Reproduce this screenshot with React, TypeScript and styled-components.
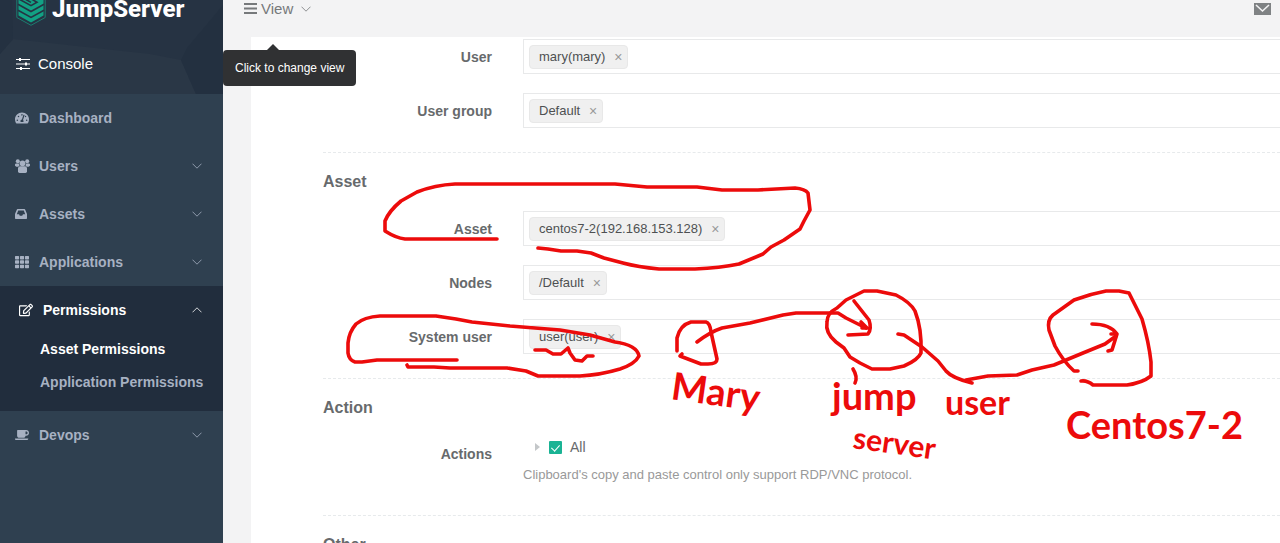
import React from 'react';
import styled, { createGlobalStyle } from 'styled-components';
import { FaCoffee, FaRegEdit, FaTachometerAlt, FaTh } from 'react-icons/fa';

const GlobalStyle = createGlobalStyle`
  *, *::before, *::after { box-sizing: border-box; }
  body {
    margin: 0;
    background: #f3f3f4;
    color: #676a6c;
    font: 13px/20px "Liberation Sans", Arial, sans-serif;
  }
  button, input { font: inherit; color: inherit; }
`;

const Page = styled.div`
  position: relative;
  display: flex;
  height: 100vh;
  overflow: hidden;
`;

const Sidebar = styled.aside`
  flex: 0 0 223px;
  background: #2f4050;
`;

const SidebarHeader = styled.header`
  position: relative;
  height: 94px;
  overflow: hidden;
  background: #263343;
  color: #fff;
`;

const HeaderPattern = styled.svg`
  position: absolute;
  inset: 0;
  width: 100%;
  height: 100%;
`;

const Brand = styled.a`
  position: relative;
  display: flex;
  align-items: flex-end;
  gap: 6px;
  height: 26px;
  padding-left: 16px;
  color: #fff;
  font: 800 24px/34px Roboto, "Liberation Sans", sans-serif;
  text-decoration: none;
`;

const ConsoleLink = styled.a`
  position: relative;
  display: flex;
  align-items: center;
  gap: 8px;
  margin-top: 28px;
  padding-left: 16px;
  color: #fff;
  font-size: 15px;
  text-decoration: none;
`;

const NavGroup = styled.div<{ $active?: boolean }>`
  padding: ${(p) => (p.$active ? '0 0 12px 4px' : '0')};
  background: ${(p) => (p.$active ? '#212d3d' : 'transparent')};
`;

const NavItem = styled.a<{ $active?: boolean }>`
  display: flex;
  align-items: center;
  height: 48px;
  padding: 0 21px 0 15px;
  color: ${(p) => (p.$active ? '#fff' : '#a7b1c2')};
  font-size: 14px;
  font-weight: 700;
  text-decoration: none;
`;

const NavIcon = styled.span`
  display: flex;
  width: 24px;
  font-size: 14px;
`;

const NavText = styled.span`
  flex: 1;
`;

const SubItem = styled.a<{ $active?: boolean }>`
  display: block;
  padding-left: 36px;
  color: ${(p) => (p.$active ? '#fff' : '#a7b1c2')};
  font-size: 14px;
  font-weight: 700;
  line-height: 33px;
  white-space: nowrap;
  text-decoration: none;
`;

const SubList = styled.div`
  margin-top: -1px;
`;

const Main = styled.main`
  flex: 1;
  min-width: 0;
  padding-left: 28px;
`;

const TopBar = styled.div`
  display: flex;
  align-items: center;
  justify-content: space-between;
  height: 37px;
  padding: 0 9px 20px 0;
`;

const ViewButton = styled.button`
  position: relative;
  display: flex;
  align-items: center;
  gap: 4px;
  margin-left: -7px;
  padding: 0;
  border: 0;
  background: none;
  color: #76797b;
  font-size: 15px;
`;

const Tooltip = styled.div`
  position: absolute;
  z-index: 2;
  top: 50px;
  left: 223px;
  padding: 8px 12px;
  border-radius: 4px;
  background: #303133;
  color: #fff;
  font-size: 12px;
  white-space: nowrap;

  &::before {
    content: "";
    position: absolute;
    top: -6px;
    left: 44px;
    border: 6px solid transparent;
    border-top: 0;
    border-bottom-color: #303133;
  }
`;

const MailButton = styled.button`
  display: flex;
  padding: 0;
  border: 0;
  background: none;
`;

const Panel = styled.form`
  min-height: 100vh;
  padding: 2px 0 0 72px;
  background: #fff;
`;

const Section = styled.section`
  & + & {
    border-top: 1px dashed #e7eaec;
  }
`;

const SectionTitle = styled.h3`
  margin: 0;
  padding: 18px 0;
  font-size: 16px;
  line-height: 22px;
`;

const Row = styled.div<{ $last?: boolean }>`
  display: flex;
  align-items: center;
  gap: 31px;
  margin-bottom: ${(p) => (p.$last ? '24px' : '19px')};
`;

const RowLabel = styled.label`
  flex: 0 0 169px;
  font-size: 14px;
  font-weight: 700;
  text-align: right;
`;

const TagBox = styled.div`
  display: flex;
  flex: 1;
  align-items: center;
  height: 35px;
  padding: 0 5px;
  border: solid #e8e9ea;
  border-width: 1px 0 1px 1px;
`;

const Tag = styled.span`
  display: flex;
  align-items: center;
  gap: 8px;
  height: 24px;
  padding: 0 4px 0 9px;
  border: 1px solid #e8e8e8;
  border-radius: 4px;
  background: #f0f0f0;
  color: #4e5052;
  white-space: nowrap;
`;

const RemoveButton = styled.button`
  width: 10px;
  padding: 0;
  border: 0;
  background: none;
  color: #999;
  font-size: 14px;
  line-height: 20px;
`;

const TagInput = styled.input`
  flex: 1;
  min-width: 0;
  border: 0;
  outline: 0;
  background: none;
`;

const ActionRow = styled(Row)`
  align-items: flex-start;
  margin: 0 0 30px;
`;

const ActionLabel = styled.div`
  flex: 0 0 169px;
  padding-top: 7px;
  font-size: 14px;
  font-weight: 700;
  text-align: right;
`;

const Tree = styled.div`
  display: flex;
  align-items: center;
  gap: 9px;
  padding-left: 12px;
`;

const TreeToggle = styled.button`
  width: 5px;
  height: 8px;
  padding: 0;
  border: solid transparent;
  border-width: 4px 0 4px 5px;
  border-left-color: #c4c7c9;
  background: none;
`;

const TreeLabel = styled.label`
  display: flex;
  align-items: center;
  gap: 8px;
  font-size: 14px;
`;

const Checkbox = styled.input`
  appearance: none;
  position: relative;
  width: 13px;
  height: 13px;
  margin: 0;
  border-radius: 1px;
  background: #1ab394;

  &:checked::after {
    content: "";
    position: absolute;
    top: 2px;
    left: 4px;
    width: 5px;
    height: 8px;
    border: solid #fff;
    border-width: 0 1px 1px 0;
    transform: rotate(42deg);
  }
`;

const HelpText = styled.p`
  margin: 8px 0 0;
  color: #999;
`;

const Ink = styled.svg`
  position: absolute;
  z-index: 3;
  top: 0;
  left: 0;
  pointer-events: none;

  text {
    fill: #ec0b0b;
    font-family: Lato, "Liberation Sans", sans-serif;
    font-weight: 700;
  }
`;

function Chevron({ up = false }: { up?: boolean }) {
  return (
    <svg width="10" height="6" viewBox="0 0 10 6" fill="none" stroke="currentColor" opacity="0.8" aria-hidden="true">
      <path d={up ? 'M.5 5.3 5 .8l4.5 4.5' : 'M.5.7 5 5.2 9.5.7'} />
    </svg>
  );
}

function GroupIcon() {
  return (
    <svg width="15" height="14" viewBox="0 0 15 14" fill="currentColor" aria-hidden="true">
      <circle cx="2.800" cy="2.300" r="2" />
      <circle cx="12.200" cy="2.300" r="2" />
      <path d="M.9 4.500h2.800l.9 1.800-1.200 1.500H1.300L0 6.800V5.300ZM14.100 4.500h-2.800l-.9 1.800 1.200 1.500h2.100L15 6.800V5.300Z" />
      <circle cx="7.500" cy="4.300" r="2.900" />
      <path d="M4.600 7.200h5.800l1.600 1.500v3.600Q12 14 10.500 14h-6Q3 14 3 12.300V8.700Z" />
    </svg>
  );
}

function TrayIcon() {
  return (
    <svg width="12" height="10" viewBox="0 0 12 10" fill="currentColor" fillRule="evenodd" aria-hidden="true">
      <path d="M2.600 0h6.800q.5 0 .7.500L12 5v4.300q0 .7-.7.700H.7Q0 10 0 9.300V5L1.900.5q.2-.5.700-.500ZM3.200 1.600 1.800 5.200H4l.8 1.500h2.400L8 5.200h2.200L8.800 1.600Z" />
    </svg>
  );
}

function LogoMark() {
  return (
    <svg width="30" height="30" viewBox="0 0 30 30" fill="none" aria-hidden="true">
      <path d="M.8 0v21.500L15 29.300l14.200-7.800V0" stroke="#1c7d70" />
      <path d="M2.500 0h25v19.500L15 26.500 2.500 19.500Z" fill="#12a184" />
      <path
        d="m2 14.200 13 7.200 13-7.200M2 8.300l13 7.200 13-7.200M2 2.500l13 7.200 6-3.400-5.500-3.300M9 3l6 3.400M28 3l-7-3"
        stroke="#263343"
        strokeWidth="1.600"
      />
    </svg>
  );
}

const navItems = [
  { label: 'Dashboard', icon: <FaTachometerAlt /> },
  { label: 'Users', icon: <GroupIcon />, expandable: true },
  { label: 'Assets', icon: <TrayIcon />, expandable: true },
  { label: 'Applications', icon: <FaTh />, expandable: true },
  { label: 'Permissions', icon: <FaRegEdit />, expandable: true, children: ['Asset Permissions', 'Application Permissions'] },
  { label: 'Devops', icon: <FaCoffee />, expandable: true },
];

function TagField({ id, label, value, last }: { id: string; label: string; value: string; last?: boolean }) {
  return (
    <Row $last={last}>
      <RowLabel htmlFor={id}>{label}</RowLabel>
      <TagBox>
        <Tag>
          {value}
          <RemoveButton type="button" aria-label={`Remove ${value}`}>×</RemoveButton>
        </Tag>
        <TagInput id={id} type="text" />
      </TagBox>
    </Row>
  );
}

function Annotations() {
  return (
    <Ink width="1280" height="543" viewBox="0 0 1280 543" aria-label="Connection notes">
      <g fill="none" stroke="#ec0b0b" strokeWidth="3.600" strokeLinecap="round" strokeLinejoin="round">
        <path d="M497 239H405Q396 238 385 231V221Q389 211 401 201L417 192Q435 185 455 184H615L647 187H697L722 190H758L795 188Q805 189 808 193L810 210L804 221L800 229L784 240L771 247L763 254L739 264Q720 268 695 269H659Q638 267 623 263L604 258L591 253L577 251H561L548 249L538 248" />
        <path d="M457 360H377L362 362H355Q349 360 348 353V343Q349 332 356 324Q364 317 380 316H436L456 319L472 322L510 326L560 330L590 335L615 342Q637 345 639 356Q635 364 620 369Q600 375 580 376H538L526 371L507 368H450L434 367H408L407 365" />
        <path d="M535 350H546L553 354H561L568 348L570 353L575 360L582 361L587 356L593 356" />
        <path d="M677 351V338Q680 325 691 322H706Q710 323 711 332L717 359Q717 364 708 364H701L680 356L682 354" />
        <path d="M697 342Q710 332 722 328L750 323L783 315L796 313H838L846 318L866 328" />
        <path d="M854 301 869 320Q872 329 868 334L848 335M861 322 867 328 862 328" />
        <path d="M836 342Q825 333 827 322Q827 313 837 308L846 300L864 291H877L896 295Q910 302 915 311Q922 329 921 353Q918 360 904 366L890 369H872L860 363L850 357L844 348Z" />
        <path d="M898 334 904 335 922 347 938 361 946 371Q952 378 972 383M966 380 988 376 1017 375 1032 370 1054 365 1083 353 1105 344 1116 336" />
        <path d="M1092 324Q1110 324 1117 334L1112 350 1108 351M1111 334H1117" />
        <path d="M1078 371H1074Q1063 361 1055 346L1049 330Q1047 320 1053 315L1074 300Q1090 294 1106 291H1119L1129 293L1135 305L1142 319Q1149 343 1151 362V376Q1142 383 1127 385H1093Q1087 380 1081 381" />
        <path d="M853 369Q858 377 855 383" />
      </g>
      <text x="670" y="399" fontSize="38" transform="rotate(8 670 399)">Mary</text>
      <text x="832" y="410" fontSize="38">jump</text>
      <text x="852" y="448" fontSize="30" transform="rotate(8 852 448)">server</text>
      <text x="945" y="415" fontSize="34">user</text>
      <text x="1066" y="439" fontSize="38">Centos7-2</text>
    </Ink>
  );
}

export default function App() {
  return (
    <Page>
      <GlobalStyle />
      <Sidebar>
        <SidebarHeader>
          <HeaderPattern viewBox="0 0 223 94" preserveAspectRatio="none" aria-hidden="true">
            <path d="M0 54 13 39 150 54 181 60 196 94H0Z" fill="#2a3746" />
            <path d="M0 0h12L13 39 0 54Z" fill="#243141" />
            <path d="M223 5 187 48l-6 12 15 34h27Z" fill="#233040" />
          </HeaderPattern>
          <Brand href="#">
            <LogoMark />
            JumpServer
          </Brand>
          <ConsoleLink href="#">
            <svg width="14" height="12" viewBox="0 0 14 12" fill="currentColor" aria-hidden="true">
              <path d="M0 1h14v1H0zM0 5.500h14v1H0zM0 10h14v1H0z" />
              <path d="M3 0h2v3H3zM9 4.500h2v3H9zM4 9h2v3H4z" />
            </svg>
            Console
          </ConsoleLink>
        </SidebarHeader>
        <nav>
          {navItems.map((item) => {
            const open = Boolean(item.children);
            return (
              <NavGroup key={item.label} $active={open}>
                <NavItem href="#" $active={open}>
                  <NavIcon>{item.icon}</NavIcon>
                  <NavText>{item.label}</NavText>
                  {item.expandable && <Chevron up={open} />}
                </NavItem>
                {item.children && (
                  <SubList>
                    {item.children.map((child, i) => (
                      <SubItem key={child} href="#" $active={i === 0}>{child}</SubItem>
                    ))}
                  </SubList>
                )}
              </NavGroup>
            );
          })}
        </nav>
      </Sidebar>
      <Main>
        <TopBar>
          <ViewButton type="button" aria-describedby="view-tip">
            <svg width="13" height="11" viewBox="0 0 13 11" fill="currentColor" aria-hidden="true">
              <path d="M0 0h13v2H0zM0 4.500h13v2H0zM0 9h13v2H0z" />
            </svg>
            View
            <span />
            <Chevron />
          </ViewButton>
          <MailButton type="button" aria-label="Messages">
            <svg width="17" height="12" viewBox="0 0 17 12" aria-hidden="true">
              <path d="M0 0h17v12H0z" fill="#7f8284" />
              <path d="m2 2 6.500 6L15 2" fill="none" stroke="#f3f3f4" strokeWidth="1.600" />
            </svg>
          </MailButton>
        </TopBar>
        <Panel>
          <Section>
            <TagField id="user" label="User" value="mary(mary)" />
            <TagField id="group" label="User group" value="Default" last />
          </Section>
          <Section>
            <SectionTitle>Asset</SectionTitle>
            <TagField id="asset" label="Asset" value="centos7-2(192.168.153.128)" />
            <TagField id="nodes" label="Nodes" value="/Default" />
            <TagField id="system-user" label="System user" value="user(user)" last />
          </Section>
          <Section>
            <SectionTitle>Action</SectionTitle>
            <ActionRow>
              <ActionLabel>Actions</ActionLabel>
              <div>
                <Tree>
                  <TreeToggle type="button" aria-label="Expand" />
                  <TreeLabel>
                    <Checkbox type="checkbox" defaultChecked />
                    All
                  </TreeLabel>
                </Tree>
                <HelpText>Clipboard's copy and paste control only support RDP/VNC protocol.</HelpText>
              </div>
            </ActionRow>
          </Section>
          <Section>
            <SectionTitle>Other</SectionTitle>
          </Section>
        </Panel>
      </Main>
      <Tooltip id="view-tip" role="tooltip">Click to change view</Tooltip>
      <Annotations />
    </Page>
  );
}
